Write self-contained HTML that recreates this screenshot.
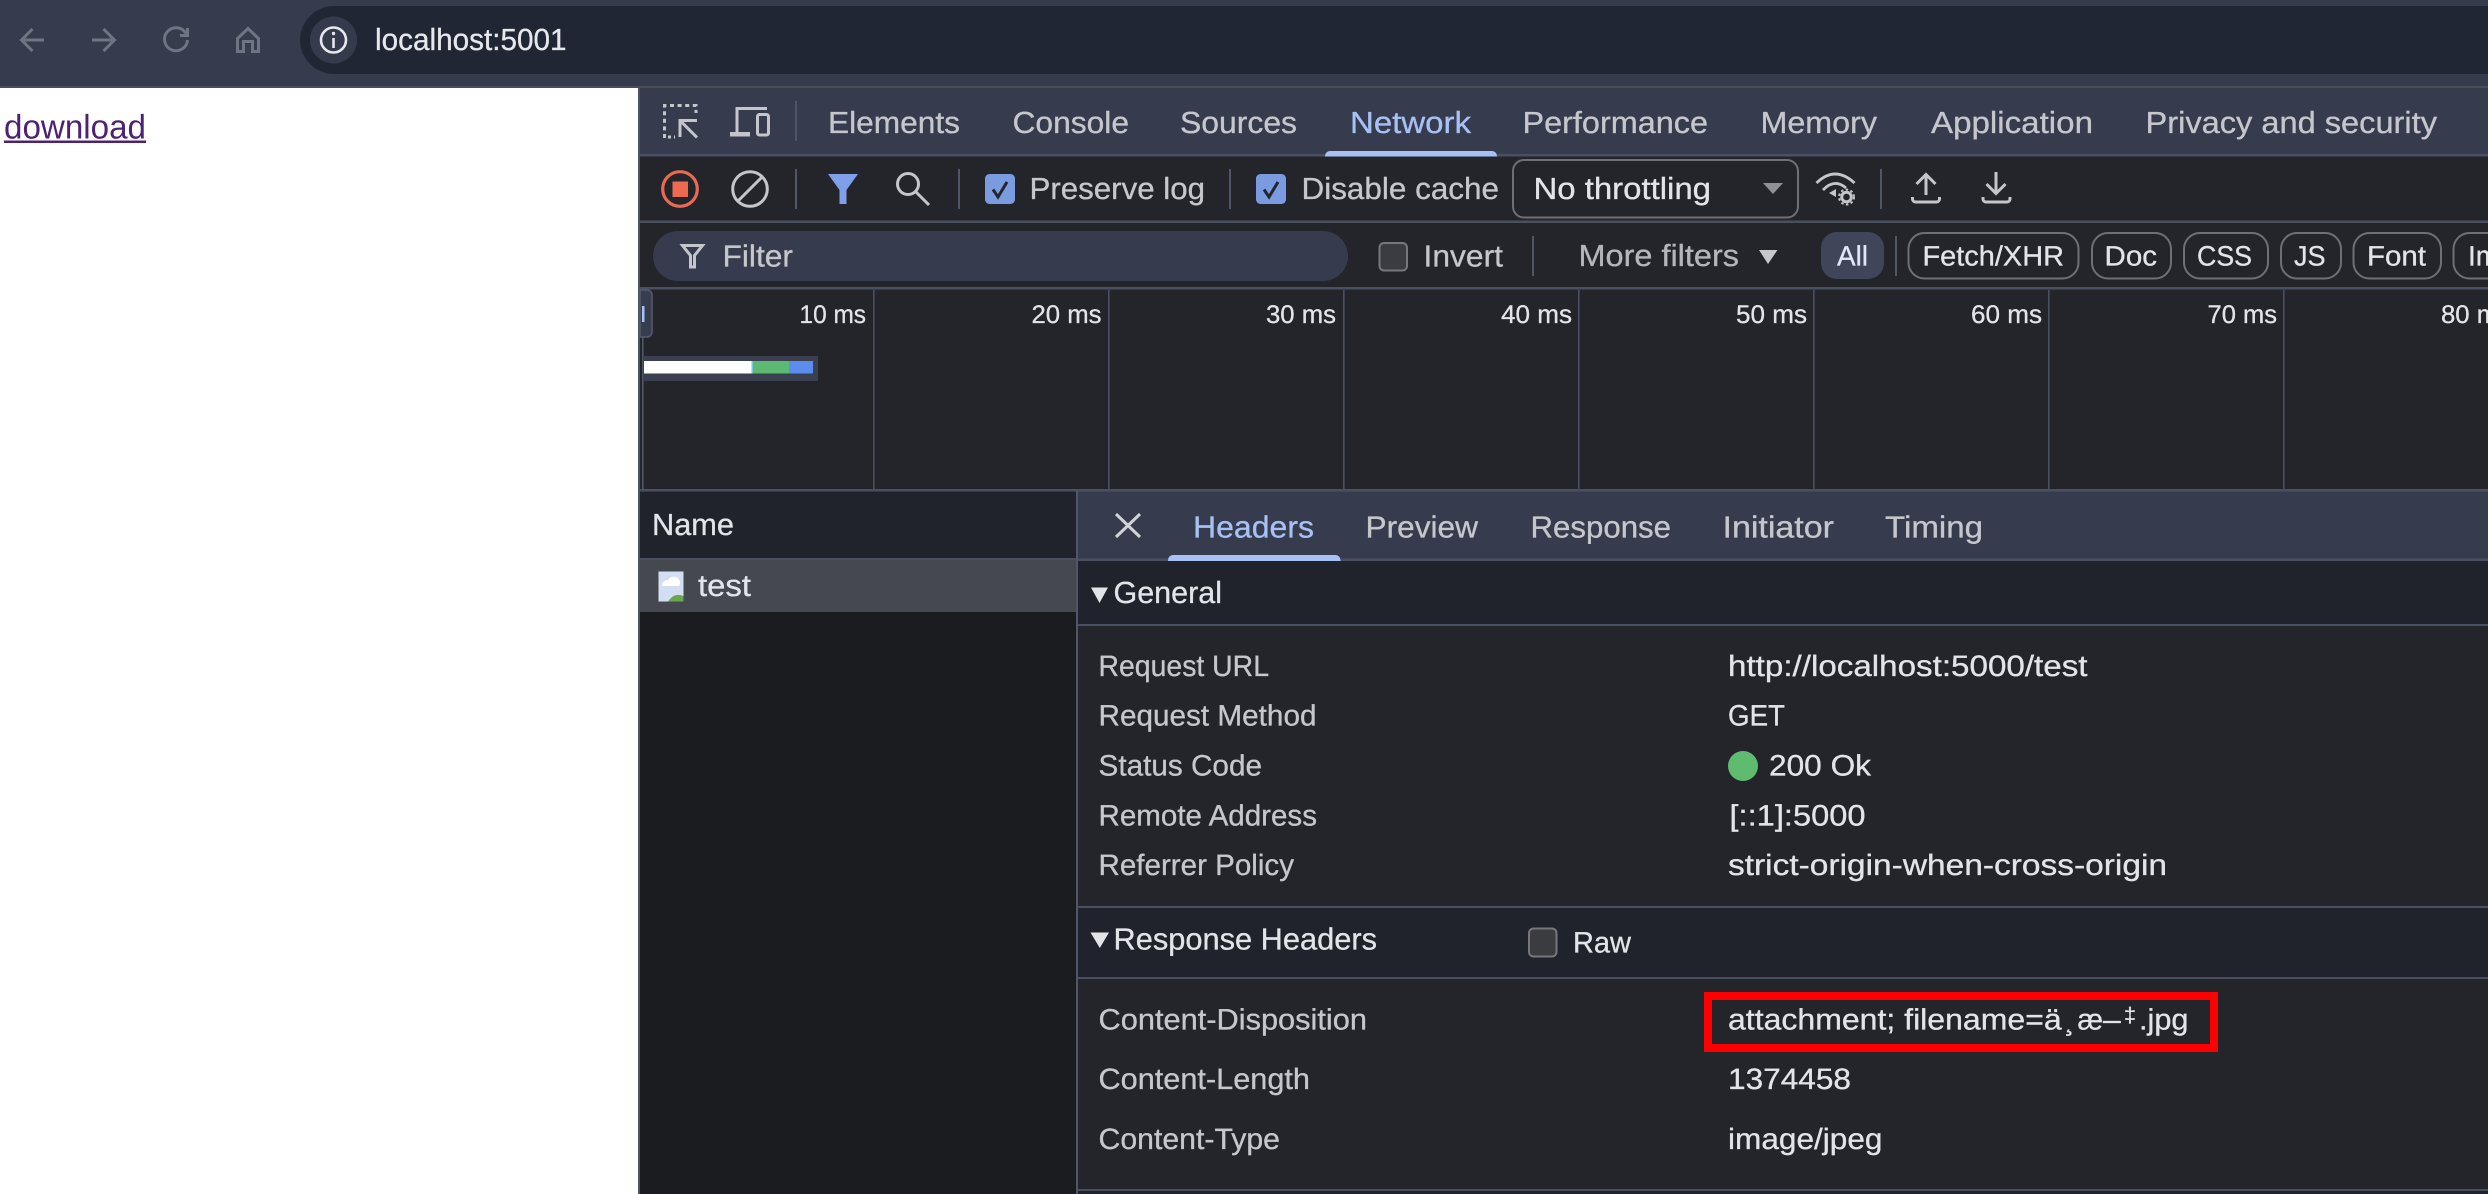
<!DOCTYPE html>
<html lang="en">
<head>
<meta charset="utf-8">
<title>localhost:5001</title>
<style>
html,body{margin:0;padding:0;background:#24252a;width:2488px;height:1194px;overflow:hidden}
svg{display:block}
text{font-family:"Liberation Sans",sans-serif;font-size:30.500px;fill:#c6c7cc;stroke:currentColor;stroke-width:.3px;color:#c6c7cc;text-rendering:geometricPrecision}
.w{fill:#e3e4e9;color:#e3e4e9}
.a{fill:#a8c1f5;color:#a8c1f5}
.s{font-size:25.500px;fill:#e3e4e9;color:#e3e4e9}
.c{font-size:28px;fill:#e3e4e9;color:#e3e4e9}
.l{font-size:29.500px}
.v{font-size:29.500px;fill:#e3e4e9;color:#e3e4e9}
.i{fill:none;stroke:#c4c6cc;stroke-width:3}
.n{fill:none;stroke:#6f7483;stroke-width:3}
</style>
</head>
<body>
<svg width="2488" height="1194" viewBox="0 0 2488 1194" xmlns="http://www.w3.org/2000/svg">
<!-- browser bar -->
<rect x="0" y="0" width="2488" height="87" fill="#363c4e"/>
<rect x="0" y="86" width="2488" height="2" fill="#4a4e58"/>
<rect x="300" y="6" width="2300" height="68" rx="34" fill="#212635"/>
<circle cx="333.500" cy="40" r="23.500" fill="#353b4c"/>
<circle cx="333.500" cy="40" r="12.500" fill="none" stroke="#e6e8ee" stroke-width="2.600"/>
<path d="M333.500 38V48" stroke="#e6e8ee" stroke-width="2.600" fill="none"/>
<circle cx="333.500" cy="33.500" r="1.700" fill="#e6e8ee"/>
<text x="375" y="50" class="w" textLength="191.500" lengthAdjust="spacingAndGlyphs" style="fill:#e6e8ee">localhost:5001</text>
<path class="n" d="M44 40H22M32.500 29L21.500 40L32.500 51"/>
<path class="n" d="M92 40H114M103.500 29L114.500 40L103.500 51"/>
<path class="n" d="M186 33.500A11.500 11.500 0 1 0 187.500 40M187.500 28V35.500H180"/>
<path class="n" d="M237.500 51.500V38.500L248 28.500L258.500 38.500V51.500H252.500V41.500H243.500V51.500Z"/>

<!-- page -->
<rect x="0" y="88" width="638" height="1106" fill="#fff"/>
<text x="4" y="138.500" textLength="142" lengthAdjust="spacingAndGlyphs" style="font-size:34px;fill:#4c2273;stroke:none">download</text>
<rect x="4" y="140.500" width="142" height="2.500" fill="#4c2273"/>

<!-- devtools -->
<rect x="638" y="88" width="1850" height="1106" fill="#24252a"/>
<rect x="638" y="88" width="2" height="1106" fill="#4f5360"/>
<rect x="640" y="88" width="1848" height="67" fill="#363c4e"/>
<rect x="640" y="154" width="1848" height="2.500" fill="#4b5060"/>
<rect x="640" y="220.500" width="1848" height="2.500" fill="#4b5060"/>
<rect x="640" y="287" width="1848" height="2.500" fill="#4b5060"/>
<rect x="640" y="489" width="1848" height="2.500" fill="#4b5060"/>

<!-- main tabs icons -->
<path d="M664.500 138V105.500H696V113" fill="none" stroke="#c4c6cc" stroke-width="3" stroke-dasharray="4 3.600"/>
<path d="M668 137H675" fill="none" stroke="#c4c6cc" stroke-width="3" stroke-dasharray="3 3"/>
<path class="i" d="M697 120.500H680V137M680 120.500L697 137.500"/>
<path d="M737 133V108.500H767" class="i"/>
<rect x="730" y="132" width="20" height="4.500" fill="#c4c6cc"/>
<rect x="757.500" y="114.500" width="11" height="20.500" rx="2" class="i"/>
<rect x="795" y="101" width="2" height="40" fill="#4f5668"/>
<text x="828" y="133" textLength="132" lengthAdjust="spacingAndGlyphs">Elements</text>
<text x="1012.500" y="133" textLength="116.500" lengthAdjust="spacingAndGlyphs">Console</text>
<text x="1180" y="133" textLength="117" lengthAdjust="spacingAndGlyphs">Sources</text>
<text x="1350" y="133" textLength="121" lengthAdjust="spacingAndGlyphs" class="a">Network</text>
<text x="1522.500" y="133" textLength="185.500" lengthAdjust="spacingAndGlyphs">Performance</text>
<text x="1760.500" y="133" textLength="116.500" lengthAdjust="spacingAndGlyphs">Memory</text>
<text x="1931" y="133" textLength="162" lengthAdjust="spacingAndGlyphs">Application</text>
<text x="2145.500" y="133" textLength="291.500" lengthAdjust="spacingAndGlyphs">Privacy and security</text>
<path d="M1325 156.500V156A5 5 0 0 1 1330 151H1492A5 5 0 0 1 1497 156V156.500Z" fill="#a8c1f5"/>

<!-- toolbar -->
<circle cx="680" cy="189" r="17.300" fill="none" stroke="#ea6a52" stroke-width="3.200"/>
<rect x="672.500" y="181.500" width="15.500" height="15.500" fill="#ee6950"/>
<circle cx="750" cy="189" r="17.300" class="i"/>
<path d="M738 201L762 177" class="i"/>
<rect x="795" y="169" width="2" height="40" fill="#4f5668"/>
<path d="M828 174H858L846.500 190V204H839.500V190Z" fill="#7f9fe8"/>
<circle cx="908" cy="184" r="10.500" class="i"/>
<path d="M915.500 191.500L929 205" class="i"/>
<rect x="958" y="169" width="2" height="40" fill="#4f5668"/>
<rect x="985" y="174" width="30" height="30" rx="4.500" fill="#7b9be0"/>
<path d="M993 189.500L998 197L1007 182" fill="none" stroke="#24252a" stroke-width="3"/>
<text x="1029.500" y="199" textLength="175.500" lengthAdjust="spacingAndGlyphs">Preserve log</text>
<rect x="1229" y="169" width="2" height="40" fill="#4f5668"/>
<rect x="1256" y="174" width="30" height="30" rx="4.500" fill="#7b9be0"/>
<path d="M1264 189.500L1269 197L1278 182" fill="none" stroke="#24252a" stroke-width="3"/>
<text x="1301.500" y="199" textLength="197.500" lengthAdjust="spacingAndGlyphs">Disable cache</text>
<rect x="1513" y="160" width="285" height="57.500" rx="11" fill="none" stroke="#6d7077" stroke-width="2"/>
<text x="1533.500" y="199" textLength="177.500" lengthAdjust="spacingAndGlyphs" class="w">No throttling</text>
<path d="M1763 183H1783L1773 194Z" fill="#8f9094"/>
<path class="i" d="M1816.500 183Q1835 165 1854.500 183M1823 190Q1834.500 178 1846 188" style="stroke-width:2.800"/>
<path d="M1829 193L1836 189V197Z" fill="#c4c6cc"/>
<circle cx="1846.500" cy="197" r="4.800" fill="none" stroke="#c4c6cc" stroke-width="3"/>
<circle cx="1846.500" cy="197" r="7.500" fill="none" stroke="#c4c6cc" stroke-width="2" stroke-dasharray="2.500 2.400"/>
<rect x="1880" y="169" width="2" height="40" fill="#4f5668"/>
<path class="i" d="M1926 195V174.500M1916.500 184L1926 174.500L1935.500 184M1912.500 197V199A3 3 0 0 0 1915.500 202H1936.500A3 3 0 0 0 1939.500 199V197"/>
<path class="i" d="M1996 172V193M1986.500 184L1996 193.500L2005.500 184M1983 197V199A3 3 0 0 0 1986 202H2007A3 3 0 0 0 2010 199V197"/>

<!-- filter bar -->
<rect x="653" y="231" width="695" height="50" rx="25" fill="#363c4e"/>
<path d="M682.500 245.500H702.500L694.500 255.500V267H690.500V255.500Z" class="i"/>
<text x="722.500" y="266.500" textLength="70.500" lengthAdjust="spacingAndGlyphs">Filter</text>
<rect x="1379.500" y="243" width="27.500" height="27.500" rx="4.500" fill="#3b3c3f" stroke="#75777c" stroke-width="2"/>
<text x="1423.500" y="266.500" textLength="79.500" lengthAdjust="spacingAndGlyphs">Invert</text>
<rect x="1532" y="236" width="2" height="40" fill="#4f5668"/>
<text x="1578.500" y="266" textLength="160.500" lengthAdjust="spacingAndGlyphs" style="fill:#b5b6bb;color:#b5b6bb">More filters</text>
<path d="M1759 250H1777.500L1768 264Z" fill="#c7c8cc"/>
<rect x="1821" y="232" width="63" height="47" rx="16" fill="#3f465a"/>
<text x="1837" y="265.500" textLength="31" lengthAdjust="spacingAndGlyphs" class="c" style="fill:#e0e6fb;color:#e0e6fb">All</text>
<rect x="1895" y="236" width="2" height="40" fill="#4f5668"/>
<rect x="1908.500" y="233" width="170" height="45.500" rx="16" fill="none" stroke="#6d7077" stroke-width="2"/>
<text x="1922.500" y="265.500" textLength="141.500" lengthAdjust="spacingAndGlyphs" class="c">Fetch/XHR</text>
<rect x="2092" y="233" width="79" height="45.500" rx="16" fill="none" stroke="#6d7077" stroke-width="2"/>
<text x="2104.500" y="265.500" textLength="52.500" lengthAdjust="spacingAndGlyphs" class="c">Doc</text>
<rect x="2184" y="233" width="84" height="45.500" rx="16" fill="none" stroke="#6d7077" stroke-width="2"/>
<text x="2197" y="265.500" textLength="55" lengthAdjust="spacingAndGlyphs" class="c">CSS</text>
<rect x="2281" y="233" width="60" height="45.500" rx="16" fill="none" stroke="#6d7077" stroke-width="2"/>
<text x="2294" y="265.500" textLength="31.500" lengthAdjust="spacingAndGlyphs" class="c">JS</text>
<rect x="2353.500" y="233" width="87.500" height="45.500" rx="16" fill="none" stroke="#6d7077" stroke-width="2"/>
<text x="2367" y="265.500" textLength="59" lengthAdjust="spacingAndGlyphs" class="c">Font</text>
<rect x="2453.500" y="233" width="80" height="45.500" rx="16" fill="none" stroke="#6d7077" stroke-width="2"/>
<text x="2468" y="265.500" class="c">Img</text>

<!-- timeline -->
<rect x="642" y="290" width="1.600" height="200" fill="#4f5668"/>
<g fill="#4a5060">
<rect x="873" y="290" width="1.600" height="199"/>
<rect x="1108" y="290" width="1.600" height="199"/>
<rect x="1343" y="290" width="1.600" height="199"/>
<rect x="1578" y="290" width="1.600" height="199"/>
<rect x="1813" y="290" width="1.600" height="199"/>
<rect x="2048" y="290" width="1.600" height="199"/>
<rect x="2283" y="290" width="1.600" height="199"/>
</g>
<text x="799.500" y="323" textLength="66.500" lengthAdjust="spacingAndGlyphs" class="s">10 ms</text>
<text x="1031.500" y="323" textLength="70" lengthAdjust="spacingAndGlyphs" class="s">20 ms</text>
<text x="1266" y="323" textLength="70" lengthAdjust="spacingAndGlyphs" class="s">30 ms</text>
<text x="1501" y="323" textLength="71" lengthAdjust="spacingAndGlyphs" class="s">40 ms</text>
<text x="1736" y="323" textLength="71" lengthAdjust="spacingAndGlyphs" class="s">50 ms</text>
<text x="1971" y="323" textLength="71" lengthAdjust="spacingAndGlyphs" class="s">60 ms</text>
<text x="2207.500" y="323" textLength="69.500" lengthAdjust="spacingAndGlyphs" class="s">70 ms</text>
<text x="2441" y="323" textLength="70" lengthAdjust="spacingAndGlyphs" class="s">80 ms</text>
<path d="M640 290H647A5 5 0 0 1 652 295V332A5 5 0 0 1 647 337H640Z" fill="#373d4e" stroke="#565c6e" stroke-width="1.500"/>
<rect x="642" y="306" width="2.500" height="16" fill="#a8c1f5"/>
<rect x="644" y="356" width="174" height="25" fill="#3a4050"/>
<rect x="644" y="361" width="107.500" height="12.500" fill="#fff"/>
<rect x="751.500" y="361" width="1.500" height="12.500" fill="#7fc6d8"/>
<rect x="753" y="361" width="36" height="12.500" fill="#5bb974"/>
<rect x="789" y="361" width="24" height="12.500" fill="#5b8def"/>

<!-- name column -->
<rect x="640" y="491.500" width="436" height="66.500" fill="#20232b"/>
<rect x="640" y="558" width="436" height="2" fill="#4b5060"/>
<rect x="640" y="560" width="436" height="634" fill="#1b1c20"/>
<rect x="640" y="560" width="436" height="52" fill="#46484f"/>
<text x="652" y="535" textLength="82" lengthAdjust="spacingAndGlyphs" class="w">Name</text>
<rect x="658.500" y="571.500" width="25" height="30" fill="#d3def5"/>
<path d="M663 587A6 5.500 0 0 1 669 581A6.500 6.500 0 0 1 681 583A5 5 0 0 1 680 587Z" fill="#fff" transform="translate(-1 -1)"/>
<path d="M668 601.500Q674 592 683.500 596V601.500Z" fill="#6aa84f"/>
<text x="698" y="596" textLength="53" lengthAdjust="spacingAndGlyphs" class="w">test</text>

<!-- detail panel -->
<rect x="1076" y="490" width="2" height="704" fill="#4f5668"/>
<rect x="1078" y="491.500" width="1410" height="67.500" fill="#363c4e"/>
<rect x="1078" y="558.500" width="1410" height="2.500" fill="#4b5060"/>
<path class="i" d="M1116 514L1140 537M1140 514L1116 537" style="stroke:#d2d3d8"/>
<text x="1193" y="537.500" textLength="121" lengthAdjust="spacingAndGlyphs" class="a">Headers</text>
<text x="1365.500" y="537.500" textLength="112.500" lengthAdjust="spacingAndGlyphs">Preview</text>
<text x="1530.500" y="537.500" textLength="140.500" lengthAdjust="spacingAndGlyphs">Response</text>
<text x="1722.500" y="537.500" textLength="111.500" lengthAdjust="spacingAndGlyphs">Initiator</text>
<text x="1885" y="537.500" textLength="98" lengthAdjust="spacingAndGlyphs">Timing</text>
<path d="M1168 561V560A5 5 0 0 1 1173 555H1335.500A5 5 0 0 1 1340.500 560V561Z" fill="#a8c1f5"/>

<rect x="1078" y="561" width="1410" height="63" fill="#20232b"/>
<rect x="1078" y="624" width="1410" height="2" fill="#4b5060"/>
<path d="M1091 587.500H1108L1099.500 603Z" fill="#e3e4e9"/>
<text x="1113.500" y="603" textLength="108.500" lengthAdjust="spacingAndGlyphs" class="w">General</text>

<text x="1098.500" y="676" textLength="170.500" lengthAdjust="spacingAndGlyphs" class="l">Request URL</text>
<text x="1098.500" y="725.500" textLength="218" lengthAdjust="spacingAndGlyphs" class="l">Request Method</text>
<text x="1098.500" y="775.500" textLength="163.500" lengthAdjust="spacingAndGlyphs" class="l">Status Code</text>
<text x="1098.500" y="825.500" textLength="218.500" lengthAdjust="spacingAndGlyphs" class="l">Remote Address</text>
<text x="1098.500" y="875" textLength="195.500" lengthAdjust="spacingAndGlyphs" class="l">Referrer Policy</text>

<text x="1728" y="676" textLength="359.500" lengthAdjust="spacingAndGlyphs" class="v">http://localhost:5000/test</text>
<text x="1728" y="725.500" textLength="57" lengthAdjust="spacingAndGlyphs" class="v">GET</text>
<circle cx="1743" cy="766" r="15" fill="#5fbb6f"/>
<text x="1769" y="775.500" textLength="102" lengthAdjust="spacingAndGlyphs" class="v">200 Ok</text>
<text x="1729.500" y="825.500" textLength="136" lengthAdjust="spacingAndGlyphs" class="v">[::1]:5000</text>
<text x="1728" y="875" textLength="439" lengthAdjust="spacingAndGlyphs" class="v">strict-origin-when-cross-origin</text>

<rect x="1078" y="906" width="1410" height="2" fill="#4b5060"/>
<rect x="1078" y="908" width="1410" height="69" fill="#20232b"/>
<rect x="1078" y="977" width="1410" height="2" fill="#4b5060"/>
<path d="M1090.500 932.500H1109L1099.800 948Z" fill="#e3e4e9"/>
<text x="1113.500" y="949.500" textLength="263.500" lengthAdjust="spacingAndGlyphs" class="w">Response Headers</text>
<rect x="1529" y="928.500" width="27.500" height="28" rx="4.500" fill="#3b3c3f" stroke="#75777c" stroke-width="2"/>
<text x="1573" y="952.500" textLength="58" lengthAdjust="spacingAndGlyphs" class="v">Raw</text>

<text x="1098.500" y="1029.500" textLength="268.500" lengthAdjust="spacingAndGlyphs" class="l">Content-Disposition</text>
<text x="1098.500" y="1089" textLength="211.500" lengthAdjust="spacingAndGlyphs" class="l">Content-Length</text>
<text x="1098.500" y="1149" textLength="181.500" lengthAdjust="spacingAndGlyphs" class="l">Content-Type</text>

<text x="1728" y="1029.500" textLength="333.700" lengthAdjust="spacingAndGlyphs" class="v">attachment; filename=ä</text>
<text x="2064.500" y="1029.500" class="v">¸</text>
<text x="2077.500" y="1029.500" textLength="25.500" lengthAdjust="spacingAndGlyphs" class="v">æ</text>
<text x="2103" y="1029.500" textLength="17.700" lengthAdjust="spacingAndGlyphs" class="v">–</text>
<text x="2124" y="1022" style="font-size:21px;fill:#e3e4e9;color:#e3e4e9" textLength="12" lengthAdjust="spacingAndGlyphs">‡</text>
<text x="2139" y="1029.500" textLength="49.500" lengthAdjust="spacingAndGlyphs" class="v">.jpg</text>
<text x="1728" y="1089" textLength="123" lengthAdjust="spacingAndGlyphs" class="v">1374458</text>
<text x="1728" y="1149" textLength="154.500" lengthAdjust="spacingAndGlyphs" class="v">image/jpeg</text>
<rect x="1708" y="996" width="506" height="52" fill="none" stroke="#fe0000" stroke-width="8"/>

<rect x="1078" y="1189" width="1410" height="2" fill="#4b5060"/>
<rect x="1078" y="1191" width="1410" height="3" fill="#20232b"/>
</svg>
</body>
</html>
